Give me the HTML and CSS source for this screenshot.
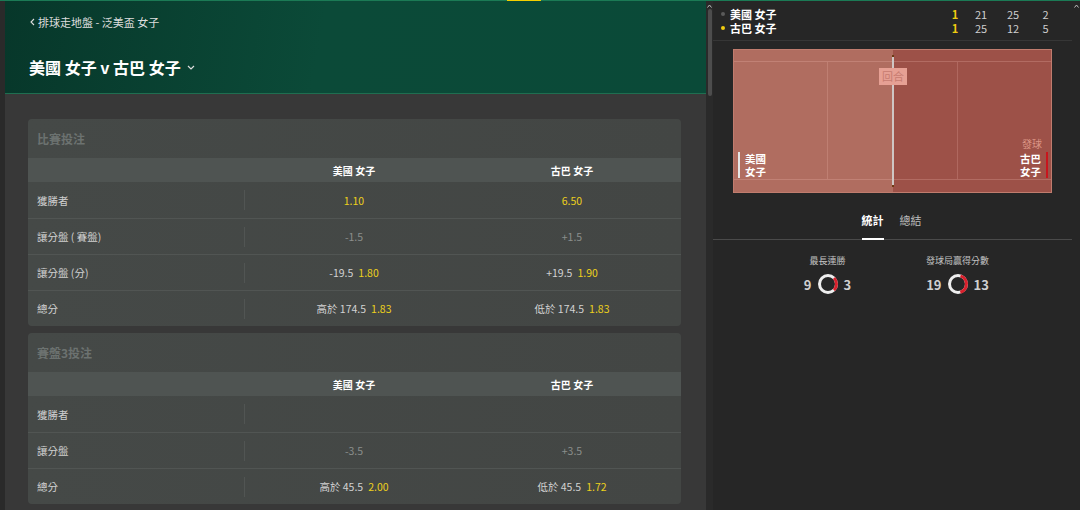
FILE: index.html
```html
<!DOCTYPE html>
<html lang="zh-Hant">
  <head>
    <meta charset="UTF-8" />
    <meta name="viewport" content="width=device-width, initial-scale=1.0" />
    <title>美國 女子 v 古巴 女子</title>
    <link rel="stylesheet" href="styles.css">
  </head>
  <body>
    <div class="topline"><span class="topline-mark"></span></div>
    <div class="page">
      <div class="rail"></div>
      <main class="main">
        <header class="event-head">
          <a class="crumb" href="#">
            <svg width="5" height="8" viewBox="0 0 5 8"><path d="M4 1 1 4l3 3" fill="none" stroke="#ddd" stroke-width="1.1"/></svg>
            排球走地盤 - 泛美盃 女子
          </a>
          <h1>美國 女子 v 古巴 女子
            <svg width="8" height="5" viewBox="0 0 8 5"><path d="M1 1l3 3 3-3" fill="none" stroke="#ddd" stroke-width="1.2"/></svg>
          </h1>
        </header>

        <div class="markets">
          <section class="market">
            <div class="market-title">比賽投注</div>
            <div class="market-head">
              <div></div>
              <div>美國 女子</div>
              <div>古巴 女子</div>
            </div>
            <div class="market-row">
              <div class="row-label">獲勝者</div>
              <div class="val"><span class="odds">1.10</span></div>
              <div class="val"><span class="odds">6.50</span></div>
            </div>
            <div class="market-row">
              <div class="row-label">讓分盤 ( 賽盤)</div>
              <div class="val off">-1.5</div>
              <div class="val off">+1.5</div>
            </div>
            <div class="market-row">
              <div class="row-label">讓分盤 (分)</div>
              <div class="val"><span class="line">-19.5</span><span class="odds">1.80</span></div>
              <div class="val"><span class="line">+19.5</span><span class="odds">1.90</span></div>
            </div>
            <div class="market-row">
              <div class="row-label">總分</div>
              <div class="val"><span class="line">高於 174.5</span><span class="odds">1.83</span></div>
              <div class="val"><span class="line">低於 174.5</span><span class="odds">1.83</span></div>
            </div>
          </section>

          <section class="market">
            <div class="market-title">賽盤3投注</div>
            <div class="market-head">
              <div></div>
              <div>美國 女子</div>
              <div>古巴 女子</div>
            </div>
            <div class="market-row">
              <div class="row-label">獲勝者</div>
              <div class="val"></div>
              <div class="val"></div>
            </div>
            <div class="market-row">
              <div class="row-label">讓分盤</div>
              <div class="val off">-3.5</div>
              <div class="val off">+3.5</div>
            </div>
            <div class="market-row">
              <div class="row-label">總分</div>
              <div class="val"><span class="line">高於 45.5</span><span class="odds">2.00</span></div>
              <div class="val"><span class="line">低於 45.5</span><span class="odds">1.72</span></div>
            </div>
          </section>
        </div>
      </main>

      <aside class="side">
        <div class="side-scroll">
          <svg class="scroll-arrow" width="5" height="4" viewBox="0 0 5 4"><path d="M.5 3.5 2.5 1l2 2.5" fill="none" stroke="#bbb" stroke-width="1"/></svg>
          <div class="scroll-thumb"></div>
        </div>

        <div class="side-body">
          <div class="scoreboard">
            <div class="score-row">
              <span class="dot"></span>
              <span class="team">美國 女子</span>
              <span class="sets">1</span><span>21</span><span>25</span><span>2</span>
            </div>
            <div class="score-row">
              <span class="dot serving"></span>
              <span class="team">古巴 女子</span>
              <span class="sets">1</span><span>25</span><span>12</span><span>5</span>
            </div>
          </div>

          <div class="court">
            <div class="half home">
              <div class="side-tag"><span>美國</span><span>女子</span></div>
            </div>
            <div class="half away">
              <div class="serve">發球</div>
              <div class="side-tag right"><span>古巴</span><span>女子</span></div>
            </div>
            <div class="court-lines">
              <div class="attack-line left"></div>
              <div class="attack-line right"></div>
            </div>
            <div class="net"></div>
            <div class="rally">回合</div>
          </div>

          <nav class="tabs">
            <a class="tab active" href="#">統計</a>
            <a class="tab" href="#">總結</a>
          </nav>

          <div class="stats">
            <div class="stat">
              <div class="stat-label">最長連勝</div>
              <div class="stat-row">
                <span>9</span>
                <svg width="22" height="22" viewBox="0 0 22 22">
                  <circle cx="11" cy="11" r="8.5" fill="none" stroke="#eee" stroke-width="3"/>
                  <circle cx="11" cy="11" r="8.5" fill="none" stroke="#d8202c" stroke-width="3" stroke-dasharray="13.35 60" transform="rotate(-45 11 11)"/>
                </svg>
                <span>3</span>
              </div>
            </div>
            <div class="stat">
              <div class="stat-label">發球局贏得分數</div>
              <div class="stat-row">
                <span>19</span>
                <svg width="22" height="22" viewBox="0 0 22 22">
                  <circle cx="11" cy="11" r="8.5" fill="none" stroke="#eee" stroke-width="3"/>
                  <circle cx="11" cy="11" r="8.5" fill="none" stroke="#d8202c" stroke-width="3" stroke-dasharray="21.7 60" transform="rotate(-73 11 11)"/>
                </svg>
                <span>13</span>
              </div>
            </div>
          </div>
        </div>

        <div class="side-scroll right">
          <svg class="scroll-arrow" width="5" height="4" viewBox="0 0 5 4"><path d="M.5 3.5 2.5 1l2 2.5" fill="none" stroke="#bbb" stroke-width="1"/></svg>
        </div>
      </aside>
    </div>
  </body>
</html>
```

FILE: styles.css
```css
body {
  margin: 0;
  width: 1080px;
  height: 510px;
  overflow: hidden;
  background: #262626;
  font-family: "Noto Sans CJK TC", "Liberation Sans", sans-serif;
  font-size: 11px;
  color: #ccc;
}
a {
  color: inherit;
  text-decoration: none;
}
.topline {
  display: flex;
  height: 1px;
  background: #1b7a55;
}
.topline-mark {
  margin-left: 507px;
  width: 34px;
  background: #f5d000;
}
.page {
  display: flex;
  height: 509px;
}
.rail {
  width: 5px;
  background: #2a2a2a;
}
.main {
  width: 701px;
  background: #383838;
  overflow: hidden;
}
.event-head {
  height: 93px;
  box-sizing: border-box;
  padding: 14px 24px 0;
  border-bottom: 1px solid #1f6e50;
  background: linear-gradient(100deg, #07372a 0%, #0b4a38 45%, #0a4a38 100%);
}
.crumb {
  display: flex;
  align-items: center;
  gap: 3px;
  line-height: 14px;
  font-size: 11px;
  color: #ddd;
}
.crumb svg {
  margin-left: 1px;
}
.event-head h1 {
  display: flex;
  align-items: center;
  gap: 6px;
  margin: 27px 0 0;
  font-size: 16px;
  line-height: 22px;
  font-weight: bold;
  color: #fff;
}
.markets {
  padding: 25px 25px 0 23px;
}
.market {
  background: linear-gradient(90deg, #454947, #434644);
  border-radius: 4px;
  margin-bottom: 7px;
  overflow: hidden;
}
.market-title {
  height: 39px;
  display: flex;
  align-items: center;
  padding-left: 9px;
  font-size: 12px;
  font-weight: bold;
  color: #6c7270;
}
.market-head,
.market-row {
  display: grid;
  grid-template-columns: 217px 218px 218px;
  align-items: center;
}
.market-head {
  height: 24px;
  background: #4f5452;
  font-size: 10px;
  font-weight: bold;
  color: #fff;
  text-align: center;
}
.market-row {
  height: 36px;
  box-sizing: border-box;
  border-top: 1px solid #515553;
  font-size: 10.5px;
}
.market-head + .market-row {
  border-top: none;
}
.row-label {
  height: 20px;
  display: flex;
  align-items: center;
  padding-left: 9px;
  border-right: 1px solid #515553;
  color: #cfcfcf;
}
.val {
  text-align: center;
  color: #d2d2d2;
}
.val.off {
  color: #8b8e8c;
}
.odds {
  color: #ecd01c;
}
.line + .odds {
  margin-left: 5px;
}

.side {
  flex: 1;
  display: flex;
  background: #262626;
}
.side-scroll {
  width: 7px;
  background: #2a2a2a;
  display: flex;
  flex-direction: column;
  align-items: center;
}
.side-scroll.right {
  width: 8px;
  background: #262626;
}
.scroll-arrow {
  margin-top: 3px;
}
.scroll-thumb {
  margin-top: 1px;
  width: 4px;
  height: 87px;
  background: #4d4d4d;
  border-radius: 2px;
}
.side-body {
  flex: 1;
}
.scoreboard {
  padding: 5px 10px 6px 8px;
  border-bottom: 1px solid #363636;
}
.score-row {
  display: grid;
  grid-template-columns: 9px 1fr 20px 32px 32px 33px;
  align-items: center;
  height: 14px;
  text-align: center;
  font-size: 11px;
  color: #cfcfcf;
}
.dot {
  width: 4px;
  height: 4px;
  border-radius: 50%;
  background: #5a5a5a;
}
.dot.serving {
  background: #f0cc10;
}
.team {
  text-align: left;
  font-weight: bold;
  color: #fff;
}
.sets {
  color: #f0cc10;
  font-weight: bold;
}
.court {
  position: relative;
  display: flex;
  height: 144px;
  margin: 8px 20px 0;
  border: 1px solid #c07c6e;
  box-sizing: border-box;
}
.half {
  flex: 1;
  display: flex;
  flex-direction: column;
  justify-content: flex-end;
  padding-bottom: 14px;
}
.half.home {
  background: #b06d60;
  padding-left: 4px;
  align-items: flex-start;
}
.half.away {
  background: #9d5148;
  padding-right: 3px;
  align-items: flex-end;
}
.side-tag {
  display: flex;
  flex-direction: column;
  border-left: 2px solid #e6e6e6;
  padding-left: 5px;
  font-size: 10.5px;
  font-weight: bold;
  color: #fff;
}
.side-tag span {
  height: 13px;
  line-height: 13px;
}
.side-tag.right {
  border-left: none;
  border-right: 2px solid #c8151d;
  padding: 0 5px 0 0;
  align-items: flex-end;
}
.serve {
  margin: 0 6px 2px 0;
  line-height: 12px;
  font-size: 10px;
  color: #dc9686;
}
.court-lines {
  position: absolute;
  top: 11px;
  bottom: 12px;
  left: 0;
  right: 0;
  border-top: 1px solid rgba(255, 200, 190, 0.22);
  border-bottom: 1px solid rgba(255, 200, 190, 0.22);
}
.attack-line {
  position: absolute;
  top: 0;
  bottom: 0;
  width: 1px;
  background: rgba(255, 200, 190, 0.2);
}
.attack-line.left {
  left: 93px;
}
.attack-line.right {
  right: 93px;
}
.net {
  position: absolute;
  top: 5px;
  bottom: 5px;
  left: 158px;
  width: 2px;
  background: #cfc6c4;
  border-top: 2px solid #6b3b14;
  border-bottom: 2px solid #6b3b14;
}
.rally {
  position: absolute;
  top: 18px;
  left: 145px;
  width: 28px;
  height: 17px;
  line-height: 17px;
  text-align: center;
  background: #e6a094;
  color: #c67b70;
  font-size: 11px;
}
.tabs {
  display: flex;
  justify-content: center;
  gap: 16px;
  margin-top: 20px;
  border-bottom: 1px solid #4a4a4a;
  padding-right: 2px;
}
.tab {
  padding-bottom: 11px;
  margin-bottom: -1px;
  border-bottom: 2px solid transparent;
  line-height: 14px;
  font-size: 11px;
  color: #bdbdbd;
}
.tab.active {
  border-bottom-color: #fff;
  color: #fff;
  font-weight: bold;
}
.stats {
  display: flex;
  justify-content: center;
  gap: 30px;
  padding-top: 15px;
}
.stat {
  width: 100px;
  display: flex;
  flex-direction: column;
  align-items: center;
}
.stat-label {
  line-height: 12px;
  font-size: 9px;
  color: #c2c2c2;
}
.stat-row {
  display: flex;
  align-items: center;
  gap: 5px;
  margin-top: 6px;
  font-size: 13px;
  font-weight: bold;
  color: #d0d0d0;
}
```
